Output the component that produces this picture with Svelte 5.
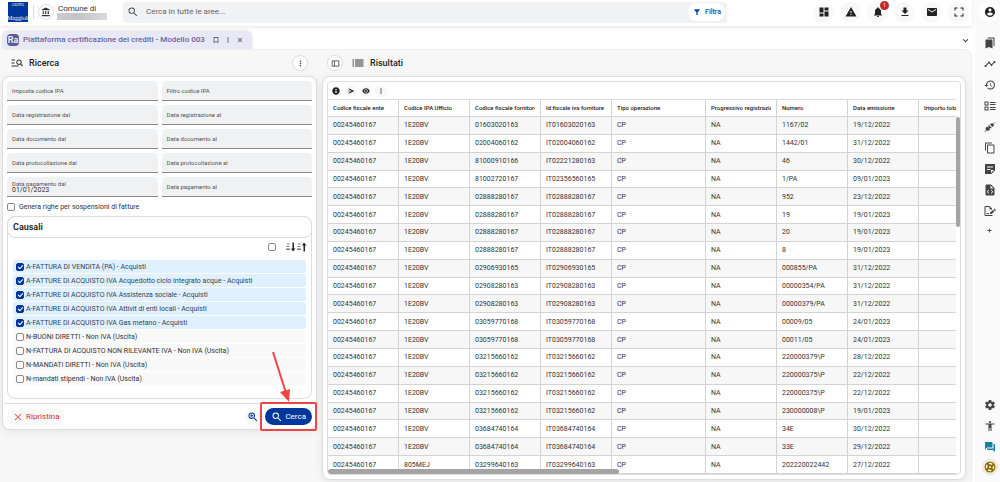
<script lang="ts">
	interface Field {
		id: string;
		label: string;
		value: string;
	}

	interface Causale {
		label: string;
		selected: boolean;
	}

	const icons: Record<string, string> = {
		search: 'M15.5 14h-.79l-.28-.27A6.471 6.471 0 0 0 16 9.5 6.5 6.5 0 1 0 9.5 16c1.61 0 3.09-.59 4.23-1.57l.27.28v.79l5 4.99L20.49 19l-4.99-5zm-6 0C7.01 14 5 11.99 5 9.5S7.01 5 9.5 5 14 7.01 14 9.5 11.99 14 9.5 14z',
		zoomIn: 'M15.5 14h-.79l-.28-.27A6.471 6.471 0 0 0 16 9.5 6.5 6.5 0 1 0 9.5 16c1.61 0 3.09-.59 4.23-1.57l.27.28v.79l5 4.99L20.49 19l-4.99-5zm-6 0C7.01 14 5 11.99 5 9.5S7.01 5 9.5 5 14 7.01 14 9.5 11.99 14 9.5 14zM12.5 8.7h-2.2V6.5H8.7v2.2H6.5v1.6h2.2v2.2h1.6v-2.2h2.2z',
		bank: 'M4 10v7h3v-7H4zm6 0v7h3v-7h-3zM2 22h19v-3H2v3zm14-12v7h3v-7h-3zm-4.5-9L2 6v2h19V6l-9.5-5z',
		filter: 'M4 4h16v3l-6 6v8h-4v-8L4 7z',
		dashboard: 'M3 13h8V3H3v10zm0 8h8v-6H3v6zm10 0h8V11h-8v10zm0-18v6h8V3h-8z',
		warning: 'M1 21h22L12 2 1 21zm12-3h-2v-2h2v2zm0-4h-2v-4h2v4z',
		bell: 'M12 22c1.1 0 2-.9 2-2h-4c0 1.1.89 2 2 2zm6-6v-5c0-3.07-1.64-5.64-4.5-6.32V4c0-.83-.67-1.5-1.5-1.5s-1.5.67-1.5 1.5v.68C7.63 5.36 6 7.92 6 11v5l-2 2v1h16v-1l-2-2z',
		download: 'M19 9h-4V3H9v6H5l7 7 7-7zM5 18v2h14v-2H5z',
		mail: 'M20 4H4c-1.1 0-1.99.9-1.99 2L2 18c0 1.1.9 2 2 2h16c1.1 0 2-.9 2-2V6c0-1.1-.9-2-2-2zm0 4l-8 5-8-5V6l8 5 8-5v2z',
		fullscreen: 'M5 15H3v6h6v-2H5v-4zM3 9h2V5h4V3H3v6zm16 10h-4v2h6v-6h-2v4zM15 3v2h4v4h2V3h-6z',
		account: 'M12 2C6.48 2 2 6.48 2 12s4.48 10 10 10 10-4.48 10-10S17.52 2 12 2zm0 3c1.66 0 3 1.34 3 3s-1.34 3-3 3-3-1.34-3-3 1.34-3 3-3zm0 14.2c-2.5 0-4.71-1.28-6-3.22.03-1.99 4-3.08 6-3.08 1.99 0 5.97 1.09 6 3.08-1.29 1.94-3.5 3.22-6 3.22z',
		bookmark: 'M19 3H5v18l7-3 7 3V3zm-2 15l-5-2.18L7 18V5h10v13z',
		more: 'M12 8c1.1 0 2-.9 2-2s-.9-2-2-2-2 .9-2 2 .9 2 2 2zm0 2c-1.1 0-2 .9-2 2s.9 2 2 2 2-.9 2-2-.9-2-2-2zm0 6c-1.1 0-2 .9-2 2s.9 2 2 2 2-.9 2-2-.9-2-2-2z',
		close: 'M19 6.41L17.59 5 12 10.59 6.41 5 5 6.41 10.59 12 5 17.59 6.41 19 12 13.41 17.59 19 19 17.59 13.41 12z',
		cross: 'M22 3.5L20.5 2 12 10.5 3.5 2 2 3.5 10.5 12 2 20.5 3.5 22 12 13.5 20.5 22 22 20.5 13.5 12z',
		chevron: 'M18.6 7L12 13.6 5.4 7 3 9.4l9 9 9-9z',
		manageSearch: 'M8 7H1V5h7v2zm-1 4H1v2h6v-2zm15.6 8l-3.9-3.9c-.8.5-1.7.9-2.7.9-3 0-5.500-2.500-5.500-5.500S13 5 16 5s5.500 2.500 5.500 5.500c0 1-.3 2-.8 2.800L24 17.600zM19.500 10.500c0-2-1.600-3.500-3.500-3.500s-3.500 1.500-3.500 3.500 1.600 3.500 3.500 3.500 3.500-1.500 3.500-3.500zM1 19h14v-2H1v2z',
		panel: 'M2 4v16h20V4H2zm2 2h4v12H4V6zm6 12V6h10v12H10z',
		list: 'M1 5h3v2H1zM6 5h17v2H6zM1 9h3v2H1zM6 9h17v2H6zM1 13h3v2H1zM6 13h17v2H6zM1 17h3v2H1zM6 17h17v2H6z',
		info: 'M12 1C5.9 1 1 5.9 1 12s4.9 11 11 11 11-4.9 11-11S18.1 1 12 1zm2 17h-4v-7h4v7zm0-9h-4V6h4v3z',
		send: 'M5 4l17 8-17 8v-3l9-4H2v-2h12L5 7z',
		eye: 'M12 4C7 4 2.73 7.11 1 12c1.73 4.89 6 8 11 8s9.27-3.11 11-8c-1.73-4.89-6-8-11-8zm0 13c-2.76 0-5-2.24-5-5s2.24-5 5-5 5 2.24 5 5-2.24 5-5 5zm0-8c-1.66 0-3 1.34-3 3s1.34 3 3 3 3-1.34 3-3-1.34-3-3-3z',
		bookmarks: 'M19 18l2 1V3c0-1.1-.9-2-2-2H8.99C7.89 1 7 1.9 7 3h10c1.1 0 2 .9 2 2v13zM15 5H5c-1.1 0-2 .9-2 2v16l7-3 7 3V7c0-1.1-.9-2-2-2z',
		timeline: 'M23 8c0 1.1-.9 2-2 2-.18 0-.35-.02-.51-.07l-3.56 3.55c.05.16.07.34.07.52 0 1.1-.9 2-2 2s-2-.9-2-2c0-.18.02-.36.07-.52l-2.55-2.55c-.16.05-.34.07-.52.07s-.36-.02-.52-.07l-4.55 4.56c.05.16.07.33.07.51 0 1.1-.9 2-2 2s-2-.9-2-2 .9-2 2-2c.18 0 .35.02.51.07l4.56-4.55C8.02 9.36 8 9.18 8 9c0-1.1.9-2 2-2s2 .9 2 2c0 .18-.02.36-.07.52l2.55 2.55c.16-.05.34-.07.52-.07s.36.02.52.07l3.55-3.56C19.02 8.35 19 8.18 19 8c0-1.1.9-2 2-2s2 .9 2 2z',
		history: 'M13 3c-4.97 0-9 4.03-9 9H1l3.89 3.89.07.14L9 12H6c0-3.87 3.13-7 7-7s7 3.13 7 7-3.13 7-7 7c-1.93 0-3.68-.79-4.94-2.06l-1.42 1.42C8.27 19.99 10.51 21 13 21c4.97 0 9-4.03 9-9s-4.03-9-9-9zm-1 5v5l4.28 2.54.72-1.21-3.5-2.08V8H12z',
		ballot: 'M1 3v8h8V3H1zm2 2h4v4H3V5zM1 13v8h8v-8H1zm2 2h4v4H3v-4zM12 4h11v2H12zM12 8h11v2H12zM12 14h11v2H12zM12 18h11v2H12z',
		plug: 'M22 2l-3 3c-2-1-4-1-5.5.5L12 7l5 5 1.5-1.5C20 9 20 7 19 5l4-2zM10.5 8.5l5 5-1.5 1.5-1.5-1.5-1.5 1.5 1.5 1.5-1.5 1.5-1 .5c-2 1.5-4 1.5-5.5.5L2 22l-1-1 3-3c-1-2-1-4 .5-5.5L6 11l2 2 1.5-1.5-2-2z',
		copy: 'M16 1H4c-1.1 0-2 .9-2 2v14h2V3h12V1zm3 4H8c-1.1 0-2 .9-2 2v14c0 1.1.9 2 2 2h11c1.1 0 2-.9 2-2V7c0-1.1-.9-2-2-2zm0 16H8V7h11v14z',
		note: 'M3 2c-1 0-1 1-1 1v18c0 1 1 1 1 1h12l7-7V3c0-1-1-1-1-1zM6 7h12v2H6zm0 5h7v2H6zm8 8v-6h6z',
		fileCode: 'M6 1C4 1 3 2 3 3v18c0 1 1 2 2 2h14c1 0 2-1 2-2V8l-7-7zm7 2l6 6h-6zM10 11v2l-2.5 2.5L10 18v2l-4.5-4.5zM14 11l4.5 4.5L14 20v-2l2.5-2.5L14 13z',
		signDoc: 'M3 2C2 2 1 3 1 4v16c0 1 1 2 2 2h14v-2H3V4h8v5h5V7l-5-5zM21 7l3 3-2 2-3-3zM18 10l3 3-6 5h-3v-3zM5 16h5v2H5z',
		plus: 'M22 14h-8v8h-4v-8H2v-4h8V2h4v8h8z',
		settings: 'M19.43 12.98c.04-.32.07-.64.07-.98s-.03-.66-.07-.98l2.11-1.65c.19-.15.24-.42.12-.64l-2-3.46c-.12-.22-.39-.3-.61-.22l-2.49 1c-.52-.4-1.08-.73-1.69-.98l-.38-2.65C14.46 2.18 14.25 2 14 2h-4c-.25 0-.46.18-.49.42l-.38 2.65c-.61.25-1.17.59-1.69.98l-2.49-1c-.23-.09-.49 0-.61.22l-2 3.46c-.13.22-.07.49.12.64l2.11 1.65c-.04.32-.07.65-.07.98s.03.66.07.98l-2.11 1.65c-.19.15-.24.42-.12.64l2 3.46c.12.22.39.3.61.22l2.49-1c.52.4 1.08.73 1.69.98l.38 2.65c.03.24.24.42.49.42h4c.25 0 .46-.18.49-.42l.38-2.65c.61-.25 1.17-.59 1.69-.98l2.49 1c.23.09.49 0 .61-.22l2-3.46c.12-.22.07-.49-.12-.64l-2.11-1.65zM12 15.5c-1.93 0-3.5-1.57-3.5-3.5s1.57-3.5 3.5-3.5 3.5 1.57 3.5 3.5-1.57 3.5-3.5 3.5z',
		accessibility: 'M12 2c1.1 0 2 .9 2 2s-.9 2-2 2-2-.9-2-2 .9-2 2-2zm9 7h-6v13h-2v-6h-2v6H9V9H3V7h18v2z',
		forum: 'M21 6h-2v9H6v2c0 .55.45 1 1 1h11l4 4V7c0-.55-.45-1-1-1zm-4 6V3c0-.55-.45-1-1-1H3c-.55 0-1 .45-1 1v14l4-4h10c.55 0 1-.45 1-1z'
	};

	const topActions = [
		{ icon: 'dashboard', label: 'Dashboard' },
		{ icon: 'warning', label: 'Avvisi' },
		{ icon: 'bell', label: 'Notifiche', badge: 1 },
		{ icon: 'download', label: 'Download' },
		{ icon: 'mail', label: 'Messaggi' },
		{ icon: 'fullscreen', label: 'Schermo intero' }
	];

	const railTop = ['bookmarks', 'timeline', 'history', 'ballot', 'plug', 'copy', 'note', 'fileCode', 'signDoc', 'plus'];
	const railBottom = ['settings', 'accessibility', 'forum'];

	let fields: Field[] = $state([
		{ id: 'imposta-ipa', label: 'Imposta codice IPA', value: '' },
		{ id: 'filtro-ipa', label: 'Filtro codice IPA', value: '' },
		{ id: 'reg-dal', label: 'Data registrazione dal', value: '' },
		{ id: 'reg-al', label: 'Data registrazione al', value: '' },
		{ id: 'doc-dal', label: 'Data documento dal', value: '' },
		{ id: 'doc-al', label: 'Data documento al', value: '' },
		{ id: 'prot-dal', label: 'Data protocollazione dal', value: '' },
		{ id: 'prot-al', label: 'Data protocollazione al', value: '' },
		{ id: 'pag-dal', label: 'Data pagamento dal', value: '01/01/2023' },
		{ id: 'pag-al', label: 'Data pagamento al', value: '' }
	]);

	let causali: Causale[] = $state([
		{ label: 'A-FATTURA DI VENDITA (PA) - Acquisti', selected: true },
		{ label: 'A-FATTURE DI ACQUISTO IVA Acquedotto ciclo integrato acque - Acquisti', selected: true },
		{ label: 'A-FATTURE DI ACQUISTO IVA Assistenza sociale - Acquisti', selected: true },
		{ label: 'A-FATTURE DI ACQUISTO IVA Attivit di enti locali - Acquisti', selected: true },
		{ label: 'A-FATTURE DI ACQUISTO IVA Gas metano - Acquisti', selected: true },
		{ label: 'N-BUONI DIRETTI - Non IVA (Uscita)', selected: false },
		{ label: 'N-FATTURA DI ACQUISTO NON RILEVANTE IVA - Non IVA (Uscita)', selected: false },
		{ label: 'N-MANDATI DIRETTI - Non IVA (Uscita)', selected: false },
		{ label: 'N-mandati stipendi - Non IVA (Uscita)', selected: false }
	]);

	let search = $state('');
	let sospensioni = $state(false);

	const columns = [
		'Codice fiscale ente',
		'Codice IPA Ufficio',
		'Codice fiscale fornitore',
		'Id fiscale iva fornitore',
		'Tipo operazione',
		'Progressivo registrazione',
		'Numero',
		'Data emissione',
		'Importo totale'
	];

	// ufficio, cf fornitore, iva fornitore, numero, data, importo
	const rows = [
		['1E20BV', '01603020163', 'IT01603020163', '1167/02', '19/12/2022', '1.220,00'],
		['1E20BV', '02004060162', 'IT02004060162', '1442/01', '31/12/2022', ''],
		['1E20BV', '81000910166', 'IT02221280163', '46', '30/12/2022', ''],
		['1E20BV', '81002720167', 'IT02356560165', '1/PA', '09/01/2023', ''],
		['1E20BV', '02888280167', 'IT02888280167', '952', '23/12/2022', ''],
		['1E20BV', '02888280167', 'IT02888280167', '19', '19/01/2023', ''],
		['1E20BV', '02888280167', 'IT02888280167', '20', '19/01/2023', ''],
		['1E20BV', '02888280167', 'IT02888280167', '8', '19/01/2023', ''],
		['1E20BV', '02906930165', 'IT02906930165', '000855/PA', '31/12/2022', ''],
		['1E20BV', '02908280163', 'IT02908280163', '00000354/PA', '31/12/2022', ''],
		['1E20BV', '02908280163', 'IT02908280163', '00000379/PA', '31/12/2022', ''],
		['1E20BV', '03059770168', 'IT03059770168', '00009/05', '24/01/2023', ''],
		['1E20BV', '03059770168', 'IT03059770168', '00011/05', '24/01/2023', ''],
		['1E20BV', '03215660162', 'IT03215660162', '220000379\\P', '28/12/2022', ''],
		['1E20BV', '03215660162', 'IT03215660162', '220000375\\P', '22/12/2022', ''],
		['1E20BV', '03215660162', 'IT03215660162', '220000375\\P', '22/12/2022', ''],
		['1E20BV', '03215660162', 'IT03215660162', '230000008\\P', '19/01/2023', ''],
		['1E20BV', '03684740164', 'IT03684740164', '34E', '30/12/2022', ''],
		['1E20BV', '03684740164', 'IT03684740164', '33E', '29/12/2022', ''],
		['805MEJ', '03299640163', 'IT03299640163', '202220022442', '27/12/2022', '']
	];

	function reset() {
		for (const field of fields) field.value = '';
		for (const causale of causali) causale.selected = false;
		sospensioni = false;
	}
</script>

{#snippet icon(name: string)}
	<svg class="icon" viewBox="0 0 24 24" aria-hidden="true"><path d={icons[name]} fill-rule="evenodd" /></svg>
{/snippet}

{#snippet sortIcon(up: boolean)}
	<svg class="sort-icon" viewBox="0 0 22 20" aria-hidden="true">
		<path d="M4 3h5v2H4zM3 8h6v2H3zM2 13h8v3H2z" fill="#777" />
		<path d={up ? 'M15 19V7h-3l4-6 5 6h-3v12z' : 'M15 1v12h-3l4 6 5-6h-3V1z'} />
	</svg>
{/snippet}

<div class="shell">
	<div class="main">
		<header class="topbar">
			<div class="logo"><small>GRUPPO</small><span>Maggioli</span></div>
			<div class="divider"></div>
			<button class="round" aria-label="Ente">{@render icon('bank')}</button>
			<div class="entity">
				<span>Comune di</span>
				<div class="redacted"></div>
			</div>
			<div class="searchbar">
				{@render icon('search')}
				<input type="text" aria-label="Cerca" placeholder="Cerca in tutte le aree..." bind:value={search} />
				<button class="filter">{@render icon('filter')}Filtra</button>
			</div>
			<nav class="top-actions">
				{#each topActions as action}
					<button aria-label={action.label}>
						{@render icon(action.icon)}
						{#if action.badge}
							<span class="badge">{action.badge}</span>
						{/if}
					</button>
				{/each}
			</nav>
		</header>

		<div class="tabs">
			<div class="tab">
				<span class="tab-logo">Ra</span>
				<span>Piattaforma certificazione dei crediti - Modello 003</span>
				<button aria-label="Segnalibro">{@render icon('bookmark')}</button>
				<button aria-label="Altro">{@render icon('more')}</button>
				<button aria-label="Chiudi">{@render icon('close')}</button>
			</div>
			<button class="expand" aria-label="Espandi">{@render icon('chevron')}</button>
		</div>

		<main class="content">
			<section class="ricerca">
				<div class="section-head">
					{@render icon('manageSearch')}
					<h2>Ricerca</h2>
					<button class="round small push" aria-label="Opzioni">{@render icon('more')}</button>
				</div>

				<form class="card" onsubmit={(e) => e.preventDefault()}>
					<div class="form-body">
						<div class="fields">
							{#each fields as field}
								<div class="field" class:filled={field.value}>
									<label for={field.id}>{field.label}</label>
									<input id={field.id} type="text" bind:value={field.value} />
								</div>
							{/each}
						</div>

						<label class="check sospensioni">
							<input type="checkbox" bind:checked={sospensioni} />
							Genera righe per sospensioni di fatture
						</label>

						<div class="causali">
							<h3>Causali</h3>
							<div class="causali-tools">
								<input type="checkbox" aria-label="Seleziona tutte" />
								<div class="sorts">
									<button type="button" aria-label="Ordina decrescente">{@render sortIcon(false)}</button>
									<button type="button" aria-label="Ordina crescente">{@render sortIcon(true)}</button>
								</div>
							</div>
							<div class="causali-list">
								{#each causali as causale}
									<label class="check causale" class:selected={causale.selected}>
										<input type="checkbox" bind:checked={causale.selected} />
										{causale.label}
									</label>
								{/each}
							</div>
						</div>
					</div>

					<div class="form-footer">
						<button type="button" class="reset" onclick={reset}>{@render icon('cross')}Ripristina</button>
						<button type="button" class="zoom" aria-label="Ricerca avanzata">{@render icon('zoomIn')}</button>
						<div class="submit-wrap">
							<button type="submit" class="submit">{@render icon('search')}Cerca</button>
							<div class="highlight"></div>
							<svg class="arrow" viewBox="0 0 20 52" aria-hidden="true">
								<path d="M2 1L15 42" stroke="#ef4444" stroke-width="2" />
								<path d="M18 51L9 41L19 38z" />
							</svg>
						</div>
					</div>
				</form>
			</section>

			<section class="risultati">
				<div class="section-head">
					<button class="round small" aria-label="Pannello">{@render icon('panel')}</button>
					{@render icon('list')}
					<h2>Risultati</h2>
				</div>

				<div class="card results-card">
					<div class="grid-box">
						<div class="grid-tools">
							<button aria-label="Informazioni">{@render icon('info')}</button>
							<button aria-label="Invia">{@render icon('send')}</button>
							<button aria-label="Visualizza">{@render icon('eye')}</button>
							<button aria-label="Altro">{@render icon('more')}</button>
						</div>
						<div class="grid-scroll">
							<table>
								<thead>
									<tr>
										{#each columns as column, i}
											<th class:wide={i === 4}><div>{column}</div></th>
										{/each}
									</tr>
								</thead>
								<tbody>
									{#each rows as [ufficio, cf, iva, numero, data, importo]}
										<tr>
											<td>00245460167</td>
											<td>{ufficio}</td>
											<td>{cf}</td>
											<td>{iva}</td>
											<td>CP</td>
											<td>NA</td>
											<td>{numero}</td>
											<td>{data}</td>
											<td class="amount">{importo}</td>
										</tr>
									{/each}
								</tbody>
							</table>
						</div>
						<div class="scroll-y"></div>
						<div class="scroll-x"></div>
					</div>
				</div>
			</section>
		</main>
	</div>

	<aside class="rail">
		<button class="account" aria-label="Account">{@render icon('account')}</button>
		{#each railTop as name}
			<button class={name} aria-label={name}>{@render icon(name)}</button>
		{/each}
		<div class="spacer"></div>
		{#each railBottom as name}
			<button class={name} aria-label={name}>{@render icon(name)}</button>
		{/each}
		<button class="help" aria-label="Aiuto">
			<svg class="icon" viewBox="0 0 24 24" aria-hidden="true">
				<circle cx="12" cy="12" r="11" />
				<circle cx="12" cy="12" r="7" fill="none" stroke="#fdf3d8" stroke-width="3" stroke-dasharray="7 4" stroke-dashoffset="3" />
				<circle cx="12" cy="12" r="2" fill="#fdf3d8" />
			</svg>
		</button>
	</aside>
</div>

<style>
	:global(body) {
		margin: 0;
		background: #fff;
	}

	.shell {
		display: flex;
		min-height: 100vh;
		font-family: Roboto, 'Liberation Sans', sans-serif;
		font-size: 7px;
		line-height: 10px;
		color: #333;
	}

	.shell * {
		box-sizing: border-box;
	}

	button,
	input {
		font: inherit;
		color: inherit;
		border: none;
		background: none;
		padding: 0;
		margin: 0;
		outline: none;
	}

	button {
		display: flex;
		align-items: center;
		justify-content: center;
		cursor: pointer;
	}

	.icon {
		width: 12px;
		height: 12px;
		flex: none;
		fill: currentColor;
	}

	.main {
		flex: 1;
		min-width: 0;
		display: flex;
		flex-direction: column;
		padding-right: 3px;
	}

	/* Top bar */
	.topbar {
		display: flex;
		align-items: center;
		height: 26px;
		padding: 0 3px 2px 8px;
		box-shadow: 0 1px 4px rgba(0, 0, 0, 0.12);
	}

	.logo {
		display: flex;
		flex-direction: column;
		justify-content: space-between;
		align-items: center;
		width: 20px;
		height: 20px;
		background: #00379b;
		color: #fff;
		font-family: 'Liberation Serif', serif;
		font-size: 6px;
		line-height: 7px;
	}

	.logo small {
		font-size: 3px;
		line-height: 6px;
	}

	.divider {
		width: 1px;
		height: 14px;
		margin: 0 4px 0 5px;
		background: #ddd;
	}

	.round {
		width: 16px;
		height: 16px;
		border: 1px solid #ddd;
		border-radius: 50%;
		background: #fff;
	}

	.round .icon {
		width: 10px;
		height: 10px;
	}

	.entity {
		margin-left: 3px;
		font-size: 8px;
		line-height: 9px;
	}

	.entity span {
		padding-left: 1px;
	}

	.redacted {
		width: 50px;
		height: 7px;
		background: linear-gradient(90deg, #ccc, #c4c4c4 40%, #dadada);
	}

	.searchbar {
		flex: 1;
		max-width: 604px;
		display: flex;
		align-items: center;
		height: 21px;
		margin-left: 16px;
		padding: 0 2px 0 4px;
		border-radius: 4px;
		background: #f0f2f3;
		color: #555;
		font-size: 8px;
	}

	.searchbar input {
		flex: 1;
		margin-left: 7px;
	}

	.searchbar input::placeholder {
		color: #666;
		opacity: 1;
	}

	.filter {
		gap: 4px;
		height: 18px;
		padding: 0 4px 0 5px;
		border-radius: 9px;
		background: #fff;
		color: #1747a0;
		font-weight: 500;
		font-size: 7px;
	}

	.filter .icon {
		width: 8px;
		height: 8px;
	}

	.top-actions {
		display: flex;
		gap: 6px;
		margin-left: auto;
	}

	.top-actions button {
		position: relative;
		width: 21px;
		height: 21px;
		border-radius: 50%;
		background: #f8f8f8;
		color: #222;
	}

	.badge {
		position: absolute;
		top: -1px;
		right: -1px;
		width: 9px;
		height: 9px;
		border-radius: 50%;
		background: #c62828;
		color: #fff;
		font-size: 5px;
		line-height: 9px;
	}

	/* Tabs */
	.tabs {
		display: flex;
		align-items: flex-end;
		justify-content: space-between;
		height: 23px;
		padding: 0 2px;
	}

	.tab {
		display: flex;
		align-items: center;
		height: 18px;
		padding: 0 6px 0 5px;
		border-radius: 6px 6px 0 0;
		background: #e9e8f6;
		color: #68659b;
		font-size: 8px;
		font-weight: 500;
		box-shadow: 0 0 3px rgba(0, 0, 0, 0.15);
	}

	.tab-logo {
		width: 12px;
		height: 12px;
		margin-right: 4px;
		border-radius: 4px;
		background: #5e5a94;
		color: #fff;
		font-size: 9px;
		line-height: 12px;
		text-align: center;
	}

	.tab button {
		width: 12px;
		color: #444;
	}

	.tab span + button {
		margin-left: 5px;
	}

	.tab .icon {
		width: 8px;
		height: 8px;
	}

	.expand {
		width: 10px;
		height: 18px;
	}

	.expand .icon {
		width: 7px;
		height: 7px;
	}

	/* Content */
	.content {
		flex: 1;
		display: flex;
		align-items: flex-start;
		gap: 5px;
		padding: 0 5px 2px 2px;
		border: 1px solid #eee;
		border-width: 1px 1px 0 0;
		border-radius: 0 8px 0 0;
		background: #f7f7f7;
	}

	.ricerca {
		width: 33%;
		max-width: 315px;
		flex: none;
	}

	.risultati {
		flex: 1;
		min-width: 0;
	}

	.section-head {
		display: flex;
		align-items: center;
		height: 26px;
		padding: 0 9px;
	}

	.risultati .section-head {
		padding: 0 5px;
	}

	.section-head h2 {
		margin: 0 0 0 6px;
		font-size: 9px;
		font-weight: 500;
		color: #222;
	}

	.section-head > .round + .icon {
		margin-left: 9px;
	}

	.small .icon {
		width: 9px;
		height: 9px;
	}

	.push {
		margin-left: auto;
	}

	.card {
		border: 1px solid #ddd;
		border-radius: 8px;
		background: #fff;
		box-shadow: 0 2px 8px rgba(0, 0, 0, 0.08);
	}

	.form-body {
		padding: 4px;
	}

	.fields {
		display: grid;
		grid-template-columns: 1fr 1fr;
		gap: 4px;
	}

	.field {
		display: grid;
		align-items: center;
		height: 20px;
		padding: 0 5px;
		border-bottom: 1px solid #888;
		border-radius: 4px 4px 0 0;
		background: #eff1f2;
		font-size: 6px;
		line-height: 7px;
	}

	.field label,
	.field input {
		grid-area: 1 / 1;
	}

	.field label {
		color: #555;
	}

	.field input {
		width: 100%;
		height: 7px;
		font-size: 7px;
	}

	.filled {
		align-content: center;
		grid-template-rows: 6px 7px;
	}

	.filled input {
		grid-area: 2 / 1;
	}

	.check {
		display: flex;
		align-items: center;
		gap: 4px;
	}

	input[type='checkbox'] {
		appearance: none;
		display: grid;
		place-items: center;
		width: 8px;
		height: 8px;
		flex: none;
		border: 1px solid #888;
		border-radius: 2px;
		background: #fff;
	}

	input[type='checkbox']:checked {
		border-color: #00379b;
		background: #00379b;
	}

	input[type='checkbox']:checked::after {
		content: '';
		width: 4px;
		height: 2px;
		border: 1px solid #fff;
		border-width: 0 0 1px 1px;
		transform: rotate(-45deg);
	}

	.sospensioni {
		height: 19px;
	}

	.causali {
		border: 1px solid #ddd;
		border-radius: 8px;
		padding-bottom: 13px;
	}

	.causali h3 {
		margin: -1px -1px 0;
		padding: 0 5px;
		border: 1px solid #ddd;
		border-radius: 8px;
		font-size: 9px;
		font-weight: 600;
		line-height: 20px;
		color: #222;
	}

	.causali-tools {
		display: flex;
		align-items: center;
		justify-content: flex-end;
		gap: 9px;
		height: 18px;
		padding: 0 4px;
	}

	.sorts {
		display: flex;
	}

	.sort-icon {
		width: 11px;
		height: 10px;
		fill: #222;
	}

	.causali-list {
		display: flex;
		flex-direction: column;
		gap: 1px;
		padding: 4px 5px 0;
	}

	.causale {
		gap: 2px;
		height: 13px;
		padding: 0 3px;
		border-radius: 3px;
		background: #f9f9f9;
	}

	.selected {
		background: #e0f0ff;
		color: #345;
	}

	.form-footer {
		display: flex;
		align-items: center;
		height: 26px;
		padding: 0 4px;
		border-top: 1px solid #ddd;
	}

	.reset {
		gap: 4px;
		height: 16px;
		padding: 0 6px 0 7px;
		border-radius: 8px;
		background: #f8f8f8;
		color: #d32f2f;
		font-size: 8px;
	}

	.reset .icon {
		width: 8px;
		height: 8px;
	}

	.zoom {
		width: 16px;
		height: 16px;
		margin: 0 4px 0 auto;
		border-radius: 50%;
		background: #f8f8f8;
		color: #00379b;
	}

	.submit-wrap {
		position: relative;
	}

	.submit {
		gap: 2px;
		height: 17px;
		padding: 0 6px;
		border-radius: 9px;
		background: #00379b;
		color: #fff;
		font-size: 8px;
	}

	/* Pointer drawn over the search button */
	.highlight {
		position: absolute;
		inset: -6px -5px;
		border: 2px solid #ef4444;
		border-radius: 2px;
		pointer-events: none;
	}

	.arrow {
		position: absolute;
		right: 21px;
		bottom: 22px;
		width: 20px;
		height: 52px;
		fill: #ef4444;
		pointer-events: none;
	}

	/* Results grid */
	.results-card {
		padding: 4px;
	}

	.grid-box {
		position: relative;
		border: 1px solid #ddd;
		border-radius: 4px;
		overflow: hidden;
	}

	.grid-tools {
		display: flex;
		gap: 3px;
		height: 17px;
		align-items: center;
		padding: 0 2px;
	}

	.grid-tools button {
		width: 12px;
		height: 12px;
		border-radius: 50%;
		background: #f7f7f7;
		color: #222;
	}

	.grid-tools .icon {
		width: 8px;
		height: 8px;
	}

	.grid-scroll {
		margin-right: 4px;
		overflow: hidden;
		border-top: 1px solid #ddd;
	}

	table {
		width: 662px;
		height: 374px;
		table-layout: fixed;
		border-spacing: 0;
	}

	th,
	td {
		padding: 0 5px;
		border-right: 1px solid #d4d4d4;
		border-bottom: 1px solid #d4d4d4;
		text-align: left;
		white-space: nowrap;
		line-height: 8px;
	}

	th {
		width: 71px;
		height: 17px;
		font-size: 6px;
		font-weight: 500;
		color: #222;
	}

	th.wide {
		width: 94px;
	}

	th div {
		overflow: hidden;
	}

	tbody tr:nth-child(odd) {
		background: #f7f7f7;
	}

	.amount {
		text-align: right;
	}

	.scroll-y {
		position: absolute;
		top: 35px;
		right: 0;
		width: 4px;
		height: 28%;
		border-radius: 2px;
		background: #a5a3a3;
	}

	.scroll-x {
		position: absolute;
		left: 0;
		bottom: 0;
		width: 46%;
		height: 5px;
		border-radius: 3px;
		background: #a5a3a3;
	}

	/* Right rail */
	.rail {
		display: flex;
		flex-direction: column;
		align-items: center;
		width: 25px;
		flex: none;
		padding: 1px 0 7px 4px;
		background: #fafafa;
		color: #444;
	}

	.rail button {
		width: 21px;
		height: 21px;
	}

	.rail .account {
		margin-bottom: 10px;
		border-radius: 50%;
		background: #fff;
		color: #222;
	}

	.rail .plus {
		height: 18px;
	}

	.rail .plus .icon {
		width: 5px;
		height: 5px;
	}

	.rail .forum {
		color: #1b7f9e;
	}

	.spacer {
		flex: 1;
	}

	.rail .help {
		width: 16px;
		height: 16px;
		margin-top: 2px;
		border: 1px solid #ddd;
		border-radius: 50%;
		background: #fdf3d8;
		color: #8a6a10;
	}
</style>
